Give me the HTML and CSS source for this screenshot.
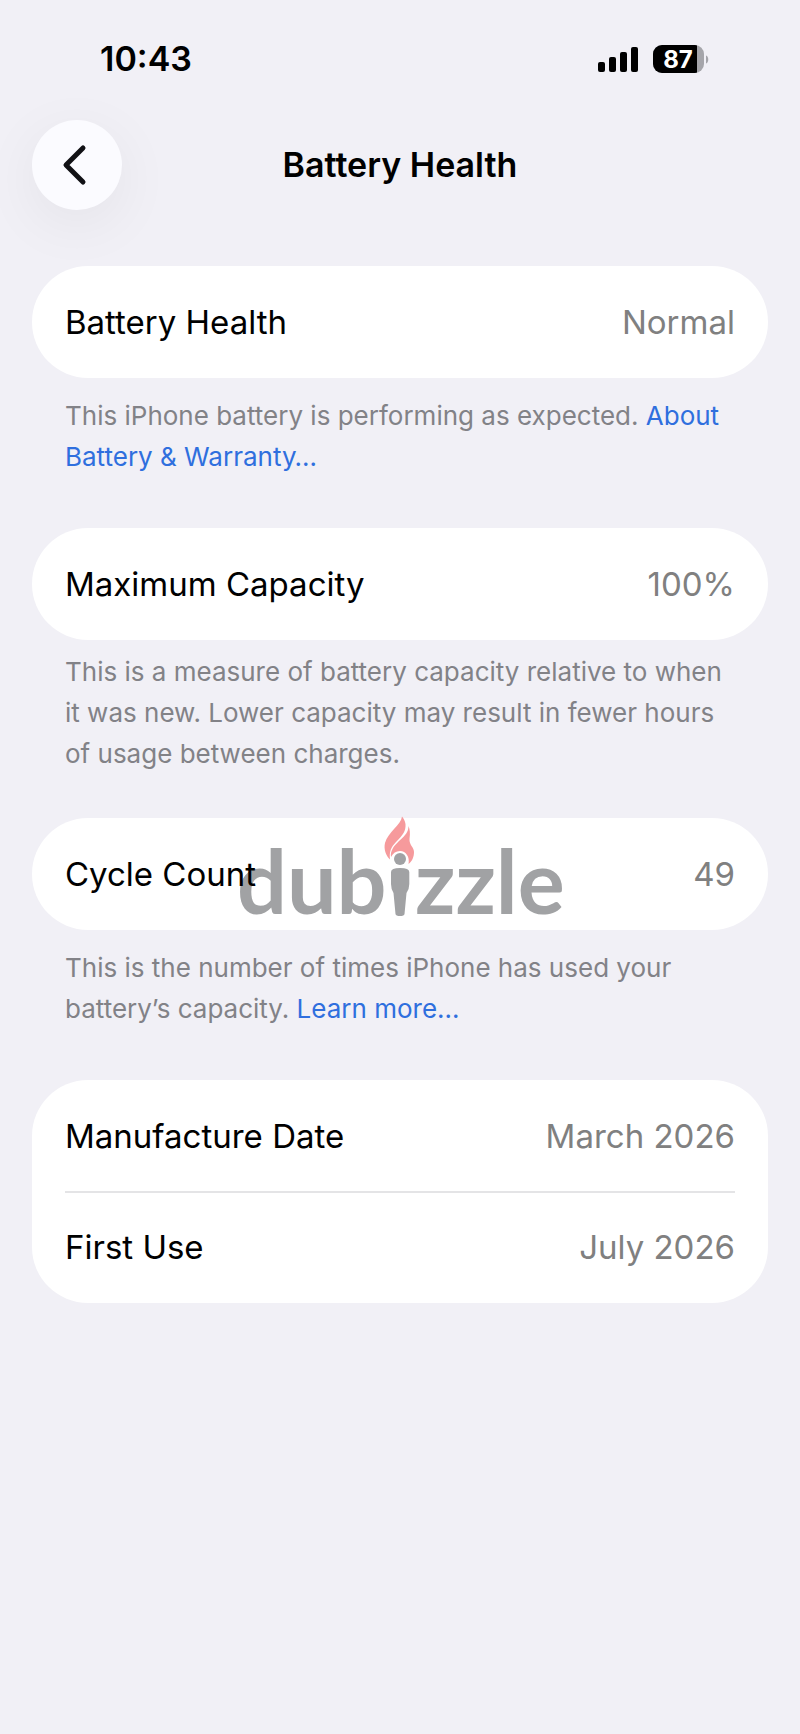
FILE: index.html
```html
<!DOCTYPE html>
<html lang="en">
<head>
    <meta charset="UTF-8">
    <meta name="viewport" content="width=device-width, initial-scale=1.0">
    <title>Battery Health</title>
    <link rel="stylesheet" href="styles.css">
</head>
<body>
    <div class="status-bar">
        <time>10:43</time>
        <div class="status-icons">
            <svg width="42" height="28" viewBox="0 0 42 28" aria-hidden="true">
                <rect x="0" y="17" width="7" height="10" rx="2"/>
                <rect x="11" y="12" width="7" height="15" rx="2"/>
                <rect x="22" y="7" width="7" height="20" rx="2"/>
                <rect x="33" y="2" width="7" height="25" rx="2"/>
            </svg>
            <svg width="56" height="28" viewBox="0 0 56 28" role="img" aria-label="Battery 87%">
                <clipPath id="shell"><rect width="51" height="28" rx="9"/></clipPath>
                <g clip-path="url(#shell)">
                    <rect width="51" height="28" fill="#a5a5aa"/>
                    <rect width="44" height="28"/>
                </g>
                <path d="M53 10.500C56 11.500 56 17.500 53 18.500Z" fill="#a5a5aa"/>
                <text x="25" y="23" class="battery-level">87</text>
            </svg>
        </div>
    </div>

    <header class="nav-bar">
        <button type="button" class="back" aria-label="Back">
            <svg width="26" height="42" viewBox="0 0 26 42" aria-hidden="true">
                <path d="M21 4L4 21L21 38"/>
            </svg>
        </button>
        <h1>Battery Health</h1>
    </header>

    <main>
        <section>
            <dl class="card">
                <div class="row"><dt>Battery Health</dt><dd>Normal</dd></div>
            </dl>
            <p class="note">This iPhone battery is performing as expected. <a href="#">About Battery &amp; Warranty…</a></p>
        </section>

        <section>
            <dl class="card">
                <div class="row"><dt>Maximum Capacity</dt><dd>100%</dd></div>
            </dl>
            <p class="note tight">This is a measure of battery capacity relative to when it was new. Lower capacity may result in fewer hours of usage between charges.</p>
        </section>

        <section>
            <div class="marked">
                <dl class="card">
                    <div class="row"><dt>Cycle Count</dt><dd>49</dd></div>
                </dl>
                <svg class="watermark" width="328" height="110" viewBox="0 0 328 110" role="img" aria-label="dubizzle">
                    <g class="letters">
                        <text x="1" y="100">dub</text>
                        <text x="179" y="100">zzle</text>
                    </g>
                    <!-- torch bearer standing in for the i -->
                    <g fill="#a1a2a4">
                        <circle cx="164" cy="45" r="6"/>
                        <path d="M155 58Q155 54 164 54Q173.300 54 173.300 58V70Q173.300 75 170.500 79L168.500 100Q168 102 164 102Q160 102 159.500 100L157.500 79Q155 75 155 70Z"/>
                    </g>
                    <g fill="#f69a9c">
                        <path d="M166 2.500C165 11 152 18 149 29C147.500 35 150 42 154 45.500C153 38 155 33 160 28C167 21 170 17 169.500 10C169 7 167.500 4 166 2.500Z"/>
                        <path d="M172.300 12C173.500 21 161 27 157 34C155 37.500 154.500 40 155 43C157 39 160 37 164 37C170 37 174 43 172.500 50C176 47.500 178 43 178 38C178 33 173 31 173.500 25C174.300 19 174 15 172.300 12Z"/>
                    </g>
                </svg>
            </div>
            <p class="note">This is the number of times iPhone has used your battery’s capacity. <a href="#">Learn more…</a></p>
        </section>

        <section>
            <dl class="card">
                <div class="row"><dt>Manufacture Date</dt><dd>March 2026</dd></div>
                <div class="row"><dt>First Use</dt><dd>July 2026</dd></div>
            </dl>
        </section>
    </main>
</body>
</html>
```

FILE: styles.css
```css
* {
    box-sizing: border-box;
    margin: 0;
}
body {
    background: #f1f0f6;
    color: #000;
    font-family: Inter, "Liberation Sans", sans-serif;
    font-size: 33px;
    line-height: 42px;
}
.status-bar {
    display: flex;
    justify-content: space-between;
    align-items: center;
    padding: 38px 91px 40px 100px;
    font-size: 34px;
    font-weight: 600;
}
.status-icons {
    display: flex;
    gap: 13px;
}
.battery-level {
    fill: #fff;
    font-size: 24px;
    font-weight: 700;
    text-anchor: middle;
}
.nav-bar {
    display: grid;
    grid-template-columns: 90px 1fr 90px;
    align-items: center;
    padding: 0 32px;
    margin-bottom: 56px;
}
.back {
    display: flex;
    align-items: center;
    justify-content: center;
    height: 90px;
    padding: 0 4px 0 0;
    border: none;
    border-radius: 50%;
    background: #fbfbff;
    box-shadow: 0 14px 60px rgba(0, 0, 0, 0.06);
    cursor: pointer;
}
.back path {
    fill: none;
    stroke: #111115;
    stroke-width: 5;
    stroke-linecap: round;
    stroke-linejoin: round;
}
h1 {
    font-size: 34px;
    font-weight: 600;
    text-align: center;
}
main {
    padding: 0 32px;
}
.card {
    padding: 0 33px;
    border-radius: 56px;
    background: #fff;
}
.row {
    display: flex;
    justify-content: space-between;
    padding: 35px 0;
}
.row + .row {
    border-top: 2px solid #e4e4e6;
    padding-top: 33px;
}
.row:not(:last-child) {
    padding-bottom: 34px;
}
dd {
    color: #808080;
}
.note {
    padding: 17px 33px 51px;
    color: #828287;
    font-size: 26px;
    line-height: 41px;
}
.note.tight {
    padding-top: 11px;
    padding-bottom: 44px;
}
.note a {
    color: #2f6fde;
    text-decoration: none;
}
.marked {
    position: relative;
}
.marked .row {
    position: relative;
    z-index: 1;
}
.watermark {
    position: absolute;
    top: -4px;
    left: 50%;
    margin-left: -164px;
    overflow: visible;
}
.letters {
    fill: #a1a2a4;
    font-family: Lato, "Open Sans", sans-serif;
    font-size: 88px;
    font-weight: 700;
}
```
